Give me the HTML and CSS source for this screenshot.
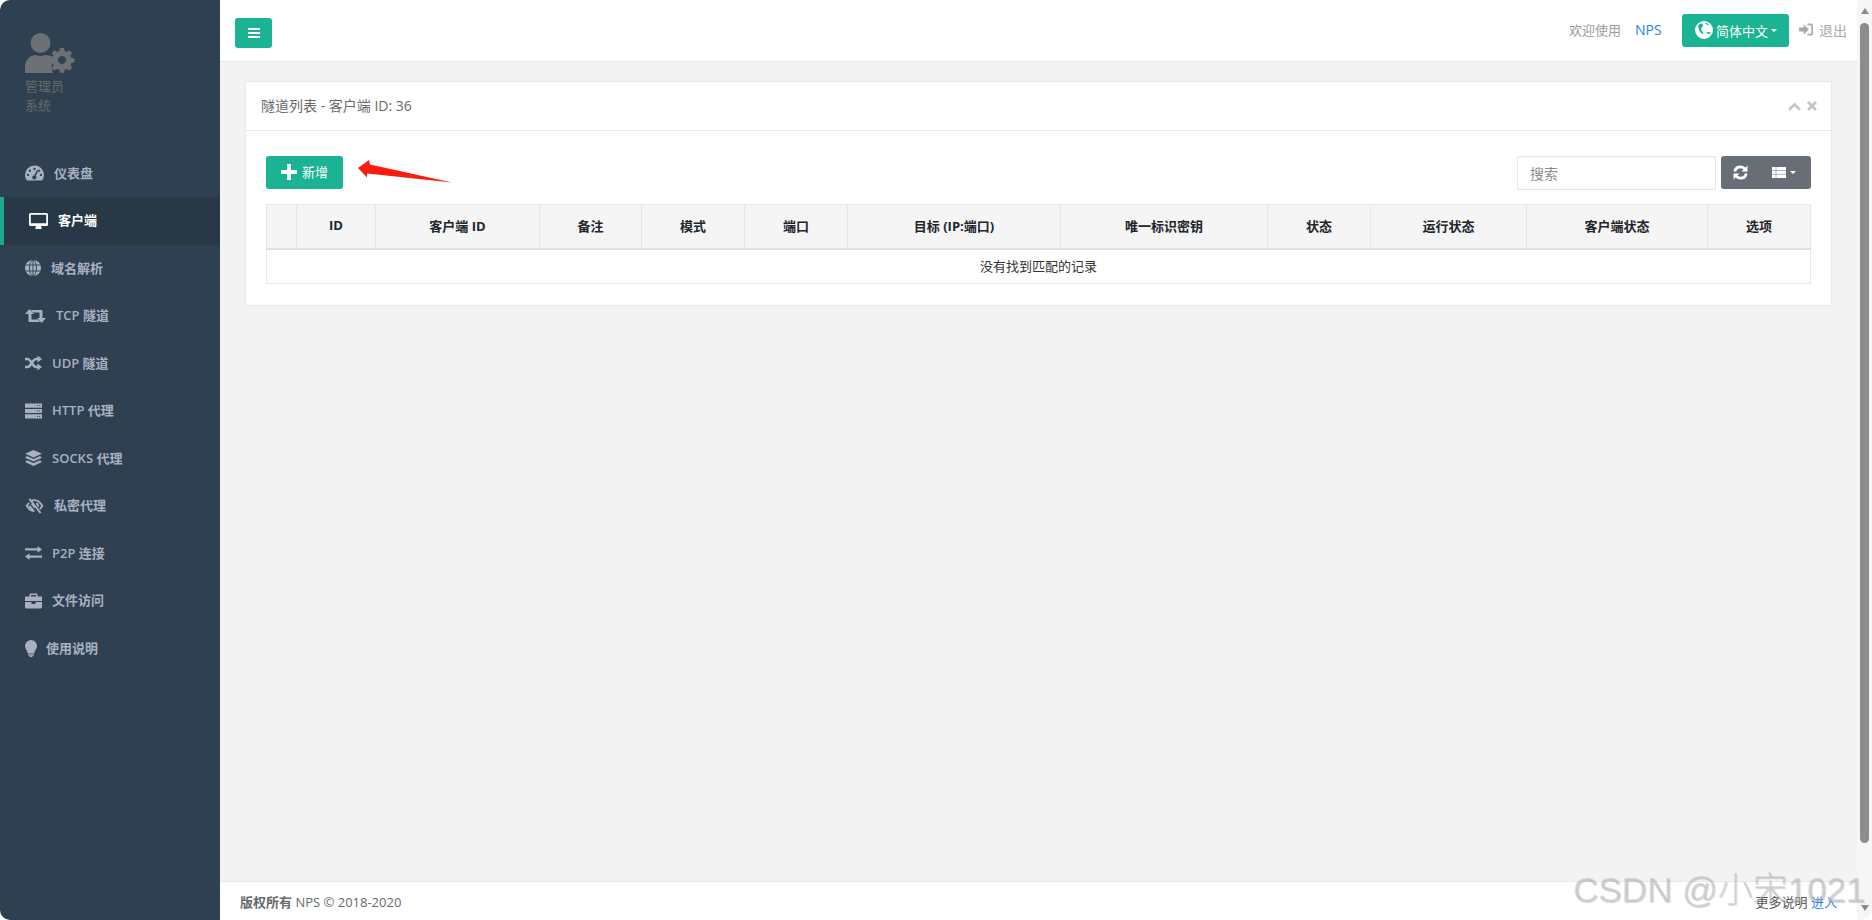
FILE: index.html
```html
<!DOCTYPE html>
<html lang="zh-CN">
<head>
<meta charset="utf-8">
<title>NPS</title>
<link rel="stylesheet" href="styles.css">
</head>
<body>
<div class="window">
  <aside class="sidebar">
    <div class="profile">
      <svg class="avatar" viewBox="0 0 50 40" fill="currentColor">
        <circle cx="15.500" cy="10" r="10"/>
        <path d="M0 40v-6c0-7 5-12 11-12q4.500 2 9 0c4 0 7 1 10 3-2 1-2.500 3-2 5-2 2-2 5 0 6-1 1-1 3 0 4z"/>
        <path fill-rule="evenodd" d="M35 15h4l.6 3 2.200.9 2.600-1.700 2.800 2.800-1.700 2.600.9 2.200 3 .6v4l-3 .6-.9 2.200 1.700 2.600-2.800 2.800-2.600-1.700-2.200.9-.6 3h-4l-.6-3-2.200-.9-2.600 1.700-2.800-2.800 1.700-2.600-.9-2.200-3-.6v-4l3-.6.9-2.200-1.700-2.600 2.800-2.800 2.600 1.700 2.200-.9zM37 23a4 4 0 1 0 .01 0z"/>
      </svg>
      <div class="role">管理员</div>
      <div class="role role-sub">系统</div>
    </div>
    <nav class="menu">
      <a class="item">
        <svg class="ic w19" viewBox="0 0 19 15" fill="currentColor"><path fill-rule="evenodd" d="M9.500 0A9.500 9.500 0 0 0 0 9.500c0 2 .6 3.800 1.700 5.200 .2.200.5.300.8.300h14c.3 0 .6-.1.800-.3A9.500 9.500 0 0 0 9.500 0zM9.500 2.300a1.100 1.100 0 1 1-.01 0zM4.800 4a1.100 1.100 0 1 1-.01 0zM14.200 4a1.100 1.100 0 1 1-.01 0zM3 8.300a1.100 1.100 0 1 1-.01 0zM16 8.300a1.100 1.100 0 1 1-.01 0zM12 4.500l1.300.6-2.500 5.500a2 2 0 1 1-1.400-.7z"/></svg>
        <span>仪表盘</span>
      </a>
      <a class="item active">
        <svg class="ic w19" viewBox="0 0 19 16" fill="currentColor"><path fill-rule="evenodd" d="M1.500 0h16A1.500 1.500 0 0 1 19 1.500v10a1.500 1.500 0 0 1-1.500 1.500h-5.500c0 1 .7 1.800.7 2.300 0 .4-.3.700-.7.700h-5c-.4 0-.7-.3-.7-.7 0-.5.7-1.300.7-2.300H1.500A1.500 1.500 0 0 1 0 11.500v-10A1.500 1.500 0 0 1 1.500 0zM1.800 1.800v8.400h15.400V1.800z"/></svg>
        <span>客户端</span>
      </a>
      <a class="item">
        <svg class="ic w16" viewBox="0 0 16 16" fill="none" stroke="currentColor"><circle cx="8" cy="8" r="8" fill="currentColor" stroke="none"/><g stroke="#2f4050" stroke-width=".9"><ellipse cx="8" cy="8" rx="3.500" ry="8"/><path d="M8 0v16M.5 5h15M.5 11h15"/></g></svg>
        <span>域名解析</span>
      </a>
      <a class="item">
        <svg class="ic w21" viewBox="0 0 21 14" fill="currentColor"><path d="M4.500 0L9 5H6.500V10.500H13L15 13H5C4 13 3.500 12.500 3.500 11.700V5H0z"/><path d="M16.500 14L12 9H14.500V3.500H8L6 1H16C17 1 17.500 1.500 17.500 2.300V9H21z"/></svg>
        <span>TCP 隧道</span>
      </a>
      <a class="item">
        <svg class="ic w17" viewBox="0 0 17 15"><g fill="none" stroke="currentColor" stroke-width="2.500"><path d="M0 3.500h2.500c3.500 0 5 8 8.500 8h2.500"/><path d="M0 11.500h2.500c3.500 0 5-8 8.500-8h2.500"/></g><path d="M12.500 0L17 3.500 12.500 7zM12.500 8L17 11.500 12.500 15z" fill="currentColor"/></svg>
        <span>UDP 隧道</span>
      </a>
      <a class="item">
        <svg class="ic w17" viewBox="0 0 17 15" fill="currentColor"><path fill-rule="evenodd" d="M0 0h17v4.200H0zM0 5.400h17v4.200H0zM0 10.800h17v4.200H0z M12 1.500v1h1v-1zM14.200 1.500v1h1v-1zM12 7v1h1v-1zM14.200 7v1h1v-1zM12 12.500v1h1v-1zM14.200 12.500v1h1v-1z"/></svg>
        <span>HTTP 代理</span>
      </a>
      <a class="item">
        <svg class="ic w17" viewBox="0 0 17 16" fill="currentColor"><path d="M8.500 0L17 3.700 8.500 7.400 0 3.700z"/><path d="M2 6.100L8.500 9 15 6.100 17 7.700 8.500 11.500 0 7.700z"/><path d="M2 10.200L8.500 13.100 15 10.200 17 11.900 8.500 16 0 11.900z"/></svg>
        <span>SOCKS 代理</span>
      </a>
      <a class="item">
        <svg class="ic w19" viewBox="0 0 19 17" fill="none" stroke="currentColor" stroke-width="2"><path d="M4 1l12 15"/><path d="M6.500 2.800C7.500 2.400 8.500 2.300 9.500 2.300c3.500 0 6.500 3 8.300 6-.7 1.200-1.700 2.500-2.800 3.500"/><path d="M4 5.200C2.900 6.200 1.900 7.200 1.200 8.300c1.700 2.800 4.700 5.500 8.300 5.700"/><path d="M4 8.300l4 4.500M6.500 6l3.500 4.200M11.500 5.500c1.500.8 2 2.500 1.500 3.800"/></svg>
        <span>私密代理</span>
      </a>
      <a class="item">
        <svg class="ic w17" viewBox="0 0 17 14" fill="currentColor"><path d="M0 2.300h12.500V0L17 3.500 12.500 6.700V4.600H0z"/><path d="M17 9.400H4.500V7.300L0 10.500 4.500 14V11.700H17z"/></svg>
        <span>P2P 连接</span>
      </a>
      <a class="item">
        <svg class="ic w17" viewBox="0 0 17 15" fill="currentColor"><path fill-rule="evenodd" d="M5.500 0h6c.6 0 1 .4 1 1v2H17v4.500H0V3h4.500V1c0-.6.4-1 1-1zM6 1.400V3h5V1.400z"/><path d="M0 8.500h6.500V10.500h4V8.500H17v5c0 .8-.7 1.500-1.500 1.500h-14C.7 15 0 14.300 0 13.500z"/></svg>
        <span>文件访问</span>
      </a>
      <a class="item">
        <svg class="ic w11" viewBox="0 0 12 17" fill="currentColor"><path d="M6 0a6 6 0 0 1 6 6c0 3-2.300 4-2.700 7.500H2.700C2.300 10 0 9 0 6a6 6 0 0 1 6-6z"/><path d="M3 14.300h6v1.100H3zM4 15.800h4L7 17H5z"/></svg>
        <span>使用说明</span>
      </a>
    </nav>
  </aside>

  <main class="main">
    <header class="topbar">
      <button class="btn toggle"><svg class="tg" viewBox="0 0 12 10" fill="currentColor"><path d="M0 0h12v2H0zM0 4h12v2H0zM0 8h12v2H0z"/></svg></button>
      <div class="top-right">
        <span class="welcome">欢迎使用</span>
        <a class="link nps">NPS</a>
        <button class="btn lang">
          <svg class="earth" viewBox="0 0 16 16"><circle cx="8" cy="8" r="8" fill="#fff"/><path d="M2.800 3.800C4.500 2.200 6.500 2 7 3.500 7.400 5 6 5 5.500 6.800 5.100 8.500 7.500 9.500 7.500 11.800 5 11.500 2.800 8 2.800 3.800zM10 10.300c1.500-.8 3-.4 4.200.2-1 1.500-2.800 1.500-4.200-.2zM9 1.500c1.200.1 2.700.7 3.700 1.800-1.200.4-3.200 0-3.700-1.800z" fill="#1ab394"/></svg>
          <span>简体中文</span><i class="caret"></i>
        </button>
        <a class="logout">
          <svg class="signin" viewBox="0 0 15 13" fill="currentColor"><path d="M0 4.300h5V1L10.500 6.500 5 12V8.700H0z"/><path d="M9 0h3.500C14 0 15 1 15 2.500v8c0 1.500-1 2.500-2.500 2.500H9v-2h3c1 0 1.200-.4 1.200-1.200V3.200C13.200 2.400 13 2 12 2H9z"/></svg>
          <span>退出</span>
        </a>
      </div>
    </header>

    <section class="content">
      <div class="panel">
        <div class="panel-head">
          <h5 class="panel-title">隧道列表 - 客户端 ID: 36</h5>
          <div class="panel-tools">
            <svg class="tool" viewBox="0 0 12 8" fill="none" stroke="currentColor" stroke-width="2.400"><path d="M1 7l5-5 5 5"/></svg>
            <svg class="tool tool-x" viewBox="0 0 10 10" fill="none" stroke="currentColor" stroke-width="2.600"><path d="M1 1l8 8M9 1l-8 8"/></svg>
          </div>
        </div>
        <div class="panel-body">
          <div class="toolbar">
            <button class="btn add"><svg class="plus" viewBox="0 0 16 16" fill="currentColor"><path d="M6 .5q0-.5.5-.5h3q.5 0 .5.500V6h5.500q.5 0 .5.500v3q0 .5-.5.500H10v5.500q0 .5-.5.500h-3q-.5 0-.5-.5V10H.5Q0 10 0 9.500v-3Q0 6 .5 6H6z"/></svg><span>新增</span></button>
            <svg class="arrow" viewBox="0 0 94 24"><path d="M0 9L11 1 12 5.500 94 23.500 9 14.500 9 18.500z" fill="#fb1c10"/></svg>
            <div class="tools-right">
              <input class="search" placeholder="搜索">
              <div class="btn-group">
                <button class="gbtn"><svg class="refresh" viewBox="0 0 15 15" fill="none" stroke="#fff" stroke-width="2.800"><path d="M1.800 6.500C2.300 3.500 4.700 1.800 7.500 1.800c2 0 3.500.9 4.600 2.300"/><path d="M13.200 8.500c-.5 3-2.900 4.700-5.700 4.700-2 0-3.500-.9-4.600-2.300"/><path d="M14.500 .6V6.500H8.600zM.5 14.400V8.500h5.900z" fill="#fff" stroke="none"/></svg></button>
                <button class="gbtn gbtn-th"><svg class="th" viewBox="0 0 14 11"><path d="M0 0h14v11H0z" fill="#fff"/><path d="M4 0v11M0 3.500h14M0 7.300h14" stroke="#676e76" stroke-width=".5"/></svg><i class="caret"></i></button>
              </div>
            </div>
          </div>
          <table class="grid">
            <colgroup>
              <col class="c0"><col class="c1"><col class="c2"><col class="c3"><col class="c4"><col class="c5"><col class="c6"><col class="c7"><col class="c8"><col class="c9"><col class="c10"><col class="c11">
            </colgroup>
            <thead>
              <tr><th></th><th>ID</th><th>客户端 ID</th><th>备注</th><th>模式</th><th>端口</th><th>目标 (IP:端口)</th><th>唯一标识密钥</th><th>状态</th><th>运行状态</th><th>客户端状态</th><th>选项</th></tr>
            </thead>
            <tbody>
              <tr><td colspan="12">没有找到匹配的记录</td></tr>
            </tbody>
          </table>
        </div>
      </div>
    </section>

    <footer class="footer">
      <div><strong>版权所有</strong> NPS © 2018-2020</div>
      <div class="foot-right">更多说明 <a class="link">进入</a></div>
    </footer>
  </main>

  <div class="scrollbar">
    <i class="sb-up"></i>
    <i class="sb-thumb"></i>
    <i class="sb-down"></i>
  </div>
</div>
<div class="watermark">CSDN @小宋1021</div>
</body>
</html>
```

FILE: styles.css
```css
* { box-sizing: border-box; }
html, body { margin: 0; height: 100%; background: #fff; overflow: hidden; }
body { font-family: "Open Sans", "Noto Sans CJK SC", "Liberation Sans", sans-serif; font-size: 13px; color: #676a6c; }
.window { display: flex; height: 920px; border-radius: 10px 0 10px 10px; overflow: hidden; }

.sidebar { width: 220px; flex: none; background: #2f4050; }
.profile { padding: 33px 25px 0; height: 149.5px; color: #6c7176; }
.avatar { display: block; width: 50px; height: 40px; }
.role { margin-top: 4px; line-height: 19px; font-size: 13px; color: #676a6c; }
.role-sub { margin-top: 0; }
.menu { display: flex; flex-direction: column; }
.item { display: flex; align-items: center; height: 47.5px; padding-left: 25px; color: #a7b1c2; font-weight: 600; line-height: 19px; }
.item.active { background: #293846; border-left: 4px solid #19aa8d; color: #fff; }
.ic { flex: none; margin-right: 10px; height: 16px; }
.w19 { width: 19px; }
.w21 { width: 21px; }
.w17 { width: 17px; }
.w16 { width: 16px; }
.w11 { width: 12px; margin-right: 9px; height: 17px; }

.main { flex: 1; min-width: 0; display: flex; flex-direction: column; background: #f3f3f4; }
.topbar { height: 62px; flex: none; background: #fff; border-bottom: 1px solid #e7eaec; display: flex; justify-content: space-between; align-items: flex-start; padding: 18px 10px 0 15px; }
.btn { border: 0; border-radius: 3px; background: #1ab394; color: #fff; font: inherit; padding: 0; display: inline-flex; align-items: center; justify-content: center; }
.toggle { width: 37px; height: 30px; }
.tg { width: 12px; height: 10px; }
.top-right { display: flex; align-items: center; margin-top: -4px; height: 33px; }
.welcome { color: #999c9e; width: 66px; margin-bottom: 2px; }
.link { color: #1c84f6; }
.nps { width: 47px; font-size: 14px; margin-bottom: 2px; }
.lang { width: 107px; height: 33px; gap: 3px; justify-content: flex-start; padding: 0 0 1px 13px; }
.earth { width: 18px; height: 18px; }
.caret { display: inline-block; width: 0; height: 0; border: 3px solid transparent; border-top-color: #fff; border-bottom: 0; }
.logout { display: flex; align-items: center; gap: 6px; color: #a7a9ab; margin-left: 10px; font-size: 14px; margin-bottom: 2px; }
.signin { width: 14px; height: 13px; }

.content { flex: 1; padding: 19px 25px 0; }
.panel { background: #fff; border: 1px solid #e7eaec; height: 225px; }
.panel-head { height: 49px; border-bottom: 1px solid #e7eaec; display: flex; justify-content: space-between; align-items: center; padding: 0 14px 0 15px; }
.panel-title { margin: 0 0 2px; font-size: 14px; font-weight: 400; color: #676a6c; }
.panel-tools { display: flex; align-items: center; gap: 6px; color: #c4c6c8; }
.tool { width: 13px; height: 9px; }
.tool-x { width: 10px; height: 10px; }
.panel-body { padding: 25px 20px 0; }
.toolbar { display: flex; align-items: flex-start; height: 48px; position: relative; }
.add { width: 77px; height: 33px; gap: 5px; padding-bottom: 2px; }
.plus { width: 16px; height: 16px; }
.arrow { position: absolute; left: 92px; top: 3px; width: 94px; height: 24px; }
.tools-right { margin-left: auto; display: flex; gap: 5px; }
.search { width: 199px; height: 34px; border: 1px solid #e5e6e7; padding: 0 12px; font: inherit; font-size: 14px; color: #676a6c; background: #fff; outline: 0; border-radius: 1px; }
.search::placeholder { color: #8a8d8f; opacity: 1; }
.btn-group { display: flex; height: 33px; background: #676e76; border-radius: 3px; }
.gbtn { border: 0; background: none; padding: 0; display: flex; align-items: center; justify-content: center; }
.gbtn:first-child { width: 41px; padding-right: 2px; }
.gbtn-th { width: 49px; gap: 4px; justify-content: flex-start; padding-left: 10px; }
.refresh { width: 15px; height: 15px; }
.th { width: 14px; height: 11px; }

.grid { width: 1544px; table-layout: fixed; border-collapse: collapse; border: 1px solid #e7e7e7; color: #212529; }
.grid th { height: 44px; background: #f5f5f6; border: 1px solid #e7e7e7; border-bottom: 2px solid #dee0e2; font-weight: 700; color: #212529; padding: 0 0 2px; text-align: center; }
.grid td { height: 35px; text-align: center; padding: 0 0 2px; color: #333; border: 1px solid #e7e7e7; }
.c0 { width: 30px; }
.c1 { width: 79px; }
.c2 { width: 164px; }
.c3 { width: 102px; }
.c4 { width: 103px; }
.c5 { width: 103px; }
.c6 { width: 213px; }
.c7 { width: 207px; }
.c8 { width: 103px; }
.c9 { width: 156px; }
.c10 { width: 181px; }
.c11 { width: 103px; }

.footer { height: 39px; flex: none; background: #fff; border-top: 1px solid #e7eaec; display: flex; justify-content: space-between; align-items: center; padding: 0 20px; }
.foot-right { color: #555; }

.scrollbar { width: 15px; flex: none; background: #f6f6f6; position: relative; display: flex; flex-direction: column; align-items: center; }
.sb-up { width: 0; height: 0; margin-top: 8px; border: 4.500px solid transparent; border-top: 0; border-bottom: 6px solid #8a8a8a; }
.sb-thumb { width: 9px; height: 820px; margin-top: 9px; background: #8c8c8c; border-radius: 5px; }
.sb-down { width: 0; height: 0; margin-top: 62px; border: 4.500px solid transparent; border-bottom: 0; border-top: 6px solid #8a8a8a; }

.watermark { position: absolute; left: 1573px; top: 861px; font-family: "Liberation Sans", "Noto Sans CJK SC", sans-serif; font-size: 35px; color: rgba(190, 190, 190, .5); text-shadow: 1px 1px 1px rgba(120, 120, 120, .3); white-space: nowrap; font-weight: 300; }
```
